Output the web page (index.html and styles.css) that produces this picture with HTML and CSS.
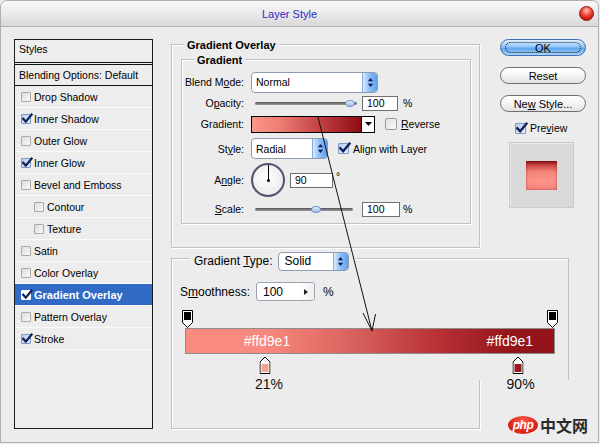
FILE: index.html
```html
<!DOCTYPE html>
<html>
<head>
<meta charset="utf-8">
<title>Layer Style</title>
<link rel="stylesheet" href="styles.css">
</head>
<body>
<div class="window">
  <div class="titlebar"><span class="title">Layer Style</span><span class="close"></span></div>
  <div class="content">
    <div class="styles-list">
      <div class="list-head">Styles</div>
      <div class="list-blend">Blending Options: Default</div>
      <div class="item"><span class="cb"></span>Drop Shadow</div>
      <div class="item"><span class="cb on"><svg viewBox="0 0 12 12"><path d="M2.2 5.8 L4.8 8.6 L10.6 1.6"/></svg></span>Inner Shadow</div>
      <div class="item"><span class="cb"></span>Outer Glow</div>
      <div class="item"><span class="cb on"><svg viewBox="0 0 12 12"><path d="M2.2 5.8 L4.8 8.6 L10.6 1.6"/></svg></span>Inner Glow</div>
      <div class="item"><span class="cb"></span>Bevel and Emboss</div>
      <div class="item sub"><span class="cb"></span>Contour</div>
      <div class="item sub"><span class="cb"></span>Texture</div>
      <div class="item"><span class="cb"></span>Satin</div>
      <div class="item"><span class="cb"></span>Color Overlay</div>
      <div class="item selected"><span class="cb on white"><svg viewBox="0 0 12 12"><path d="M2.2 5.8 L4.8 8.6 L10.6 1.6"/></svg></span>Gradient Overlay</div>
      <div class="item"><span class="cb"></span>Pattern Overlay</div>
      <div class="item"><span class="cb on"><svg viewBox="0 0 12 12"><path d="M2.2 5.8 L4.8 8.6 L10.6 1.6"/></svg></span>Stroke</div>
    </div>

    <div class="main">
      <div class="top-row">
        <div class="group outer">
          <div class="gtitle"><span>Gradient Overlay</span></div>
          <div class="group inner">
            <div class="gtitle"><span>Gradient</span></div>
            <div class="rows">
              <div class="row r1">
                <div class="lbl">Blend M<u>o</u>de:</div>
                <div class="select w-blend"><span class="txt">Normal</span><span class="spin"><svg width="7" height="11" viewBox="0 0 7 11"><path d="M3.5 1 L6.2 4.3 H0.8Z M3.5 10 L6.2 6.7 H0.8Z"/></svg></span></div>
              </div>
              <div class="row r2">
                <div class="lbl">O<u>p</u>acity:</div>
                <div class="slider w-op"><span class="track"></span><span class="thumb" style="left:90px"></span></div>
                <div class="num w-op-in">100</div>
                <span class="pct">%</span>
              </div>
              <div class="row r3">
                <div class="lbl">Gradient:</div>
                <div class="swatch"></div>
                <div class="swatch-dd"><svg width="7" height="4" viewBox="0 0 7 4"><path d="M0 0H7L3.5 4Z"/></svg></div>
                <span class="cb big rev"></span>
                <span class="cbtxt"><u>R</u>everse</span>
              </div>
              <div class="row r4">
                <div class="lbl">St<u>y</u>le:</div>
                <div class="select w-style"><span class="txt">Radial</span><span class="spin"><svg width="7" height="11" viewBox="0 0 7 11"><path d="M3.5 1 L6.2 4.3 H0.8Z M3.5 10 L6.2 6.7 H0.8Z"/></svg></span></div>
                <span class="cb big on align"><svg viewBox="0 0 12 12"><path d="M2.2 5.8 L4.8 8.6 L10.6 1.6"/></svg></span>
                <span class="cbtxt">Align with Layer</span>
              </div>
              <div class="row r5">
                <div class="lbl">A<u>n</u>gle:</div>
                <div class="dial"><span class="needle"></span><span class="dot"></span></div>
                <div class="num w-ang">90</div>
                <span class="deg">°</span>
              </div>
              <div class="row r6">
                <div class="lbl"><u>S</u>cale:</div>
                <div class="slider w-sc"><span class="track"></span><span class="thumb" style="left:56px"></span></div>
                <div class="num w-sc-in">100</div>
                <span class="pct">%</span>
              </div>
            </div>
          </div>
        </div>

        <div class="right">
          <div class="btn ok"><span>OK</span></div>
          <div class="btn"><span>Reset</span></div>
          <div class="btn"><span>Ne<u>w</u> Style...</span></div>
          <div class="pv-row"><span class="cb big on"><svg viewBox="0 0 12 12"><path d="M2.2 5.8 L4.8 8.6 L10.6 1.6"/></svg></span><span class="cbtxt">Pre<u>v</u>iew</span></div>
          <div class="preview"><div class="pv-square"></div></div>
        </div>
      </div>

      <div class="gt-panel">
        <div class="gt-title">
          <div class="gt-bg">
            <span class="gt-lbl">Gradient <u>T</u>ype:</span>
            <div class="select gt-select"><span class="txt">Solid</span><span class="spin"><svg width="7" height="11" viewBox="0 0 7 11"><path d="M3.5 1 L6.2 4.3 H0.8Z M3.5 10 L6.2 6.7 H0.8Z"/></svg></span></div>
          </div>
        </div>
        <div class="smooth-row">
          <span class="sm-lbl">S<u>m</u>oothness:</span>
          <div class="sm-input"><span class="txt">100</span><span class="sm-btn"><svg width="4" height="6" viewBox="0 0 4 6"><path d="M0 0L4 3L0 6Z"/></svg></span></div>
          <span class="sm-pct">%</span>
        </div>
        <div class="editor">
          <div class="ostops">
            <svg class="ostop left" width="11" height="18" viewBox="0 0 11 18"><path d="M0.5 0.5 H10.5 V12.5 L5.5 17.5 L0.5 12.5 Z" fill="#fff" stroke="#000"/><rect x="2" y="2" width="7" height="8" fill="#000"/></svg>
            <svg class="ostop rightstop" width="11" height="18" viewBox="0 0 11 18"><path d="M0.5 0.5 H10.5 V12.5 L5.5 17.5 L0.5 12.5 Z" fill="#fff" stroke="#000"/><rect x="2" y="2" width="7" height="8" fill="#000"/></svg>
          </div>
          <div class="gbar">
            <span class="gbar-txt" style="left:22%">#ffd9e1</span>
            <span class="gbar-txt" style="left:88%">#ffd9e1</span>
          </div>
          <div class="cstops">
            <svg class="cstop" style="left:21.7%" width="11" height="18" viewBox="0 0 11 18"><path d="M0.5 17.5 H10.5 V6 L5.5 1 L0.5 6 Z" fill="#fff" stroke="#000"/><rect x="2" y="8" width="7" height="8" fill="#f3a196"/></svg>
            <svg class="cstop" style="left:89.9%" width="11" height="18" viewBox="0 0 11 18"><path d="M0.5 17.5 H10.5 V6 L5.5 1 L0.5 6 Z" fill="#fff" stroke="#000"/><rect x="2" y="8" width="7" height="8" fill="#9b1822"/></svg>
          </div>
          <div class="clabels">
            <span class="clabel" style="left:22.7%">21%</span>
            <span class="clabel" style="left:90.7%">90%</span>
          </div>
        </div>
      </div>
      <div class="gt-foot"></div>
    </div>
  </div>

  <div class="logo"><span class="php">php</span><span class="cn">中文网</span></div>

  <svg class="arrow" width="600" height="444" viewBox="0 0 600 444">
    <path d="M318 117 L372 331 M363 313 L372 331 L375.5 314" fill="none" stroke="#111" stroke-width="1"/>
  </svg>
</div>
</body>
</html>
```

FILE: styles.css
```css
* { box-sizing: border-box; }
html, body { margin: 0; padding: 0; }
body {
  width: 600px; height: 444px; overflow: hidden;
  background: #ececec;
  font-family: "Liberation Sans", Arial, sans-serif;
  font-size: 10.5px; color: #000;
}
u { text-decoration: underline; text-underline-offset: 1px; }

.window {
  position: relative;
  width: 599px; height: 443px;
  border: 1px solid #b0b0b0;
  border-radius: 7px 7px 0 0;
  background: #ececec;
}

/* title bar */
.titlebar {
  height: 26px;
  border-bottom: 1px solid #b2b2b2;
  border-radius: 6px 6px 0 0;
  background: linear-gradient(#f9f9f9, #e8e8e8 55%, #d9d9d9);
  display: flex; align-items: center;
}
.title { margin-left: 261px; color: #2a2ac4; font-size: 11px; }
.close {
  margin-left: auto; margin-right: 4px;
  width: 15px; height: 15px; border-radius: 50%;
  border: 1px solid #8b1b12;
  background: radial-gradient(circle at 50% 28%, #ffc4bc 0, #f4584a 35%, #cf1c10 70%, #9a0c06 100%);
}

.content { display: flex; align-items: flex-start; }

/* styles list */
.styles-list {
  margin: 12px 0 0 13px;
  width: 139px; height: 390px;
  border: 1px solid #1b1b1b;
  background: #ededed;
}
.list-head {
  height: 25px; padding: 2px 0 0 4px; line-height: 14px;
  border-bottom: 3px double #111;
}
.list-blend {
  height: 21px; padding-left: 4px; line-height: 20px;
  border-bottom: 1px solid #111;
}
.item {
  height: 22px; display: flex; align-items: center;
  padding-left: 6px;
  border-bottom: 1px solid #fbfbfb;
}
.item.sub { padding-left: 19px; }
.item.selected {
  background: #316ac5; color: #fff;
  font-weight: bold; font-size: 11px;
}

/* checkboxes */
.cb {
  position: relative; flex: none;
  width: 10px; height: 10px; margin-right: 3px;
  border: 1px solid #a9a9a9; border-radius: 1px;
  background: linear-gradient(135deg, #dedede, #f8f8f8);
}
.cb.on { background: linear-gradient(135deg, #b9cdea, #e6eefa); border-color: #7f9ac2; }
.cb.white { background: #fff; border-color: #fff; }
.cb svg {
  position: absolute; left: -1px; top: -2px; width: 12px; height: 12px; overflow: visible;
}
.cb svg path { fill: none; stroke: #0d1f5c; stroke-width: 2.2; stroke-linecap: square; }
.cb.big { width: 11px; height: 11px; margin-right: 4px; }
.cb.big svg { width: 13px; height: 13px; }
.cb.rev { width: 12px; height: 12px; margin-left: 10px; background: linear-gradient(135deg, #e2e2e2, #fafafa); border-color: #9a9a9a; border-radius: 2px; }
.cb.align { margin-left: 10px; }

/* main column */
.main { margin-left: 18px; }
.top-row { display: flex; align-items: flex-start; }

.group {
  border: 1px solid #c1c1c1;
  box-shadow: inset 1px 1px 0 #fff, 1px 1px 0 #fff;
}
.outer { width: 309px; margin-top: 17px; }
.inner { width: 290px; margin: 7px 0 23px 9px; }
.gtitle {
  display: flex; height: 14px; margin-top: -7px; line-height: 14px;
  font-weight: bold; font-size: 11px;
}
.gtitle span { background: #ececec; padding: 0 3px; margin-left: 12px; }

.rows { margin-top: 4px; padding-bottom: 3px; }
.row { display: flex; align-items: center; }
.r1 { height: 22px; }
.r2 { height: 20px; }
.r3 { height: 22px; }
.r4 { height: 27px; }
.r5 { height: 36px; }
.r6 { height: 22px; }
.lbl { width: 62px; margin-right: 7px; text-align: right; flex: none; }

.select {
  display: flex; align-items: center; height: 21px;
  border: 1px solid #8c9bb0; border-radius: 4px;
  background: #fff; overflow: hidden; padding-left: 4px;
}
.select .txt { flex: 1; }
.spin {
  width: 15px; align-self: stretch;
  display: flex; align-items: center; justify-content: center;
  border-left: 1px solid #86aee0;
  background: linear-gradient(90deg, #d9ebfd, #8dc0f6 45%, #5f9fec 100%);
}
.spin svg path { fill: #0d1f5a; }
.w-blend { width: 127px; }
.w-style { width: 77px; }

.slider { position: relative; height: 9px; margin-left: 4px; }
.w-op { width: 102px; }
.w-sc { width: 98px; }
.track {
  position: absolute; left: 0; right: 0; top: 3px; height: 3px;
  border-radius: 2px;
  background: linear-gradient(#555, #9c9c9c);
}
.thumb {
  position: absolute; top: 1px; width: 10px; height: 7px; border-radius: 50%;
  border: 1px solid #6f8fc6;
  background: linear-gradient(#e4eefc, #9bb9e6);
}
.num {
  height: 15px; border: 1px solid #707070; background: #fff;
  padding-left: 4px; line-height: 13px;
}
.w-op-in { width: 36px; margin-left: 5px; }
.w-sc-in { width: 38px; margin-left: 9px; }
.pct { margin-left: 5px; }
.w-sc-in + .pct { margin-left: 3px; }

.swatch {
  width: 111px; height: 17px; border: 1px solid #000;
  background: linear-gradient(90deg, #fb968c 0%, #ef7e76 25%, #c64446 60%, #8e0d13 100%);
}
.swatch-dd {
  width: 13px; height: 17px; border: 1px solid #000; border-left: none;
  background: #fff; display: flex; align-items: center; justify-content: center;
}
.swatch-dd svg path { fill: #000; }
.cbtxt { white-space: nowrap; }

.dial {
  position: relative; width: 34px; height: 34px; border-radius: 50%;
  border: 2px solid #50556f;
  background: radial-gradient(circle at 45% 40%, #ffffff, #ececec 70%, #dcdcdc);
}
.needle { position: absolute; left: 14.5px; top: 0; width: 1.5px; height: 15px; background: #000; }
.dot { position: absolute; left: 13.5px; top: 13.5px; width: 3.5px; height: 3.5px; border-radius: 50%; background: #000; }
.w-ang { width: 43px; margin-left: 5px; }
.deg { align-self: flex-start; margin: 8px 0 0 3px; }

/* right column */
.right { width: 86px; margin: 12px 0 0 20px; display: flex; flex-direction: column; }
.btn {
  position: relative;
  width: 86px; height: 17px; margin-bottom: 11px;
  border: 1px solid #6d6d6d; border-radius: 9px;
  background: linear-gradient(#ffffff, #f6f6f6 45%, #e2e2e2);
  display: flex; align-items: center; justify-content: center;
  font-size: 11px; white-space: nowrap;
}
.btn.ok {
  border-color: #3c6db4;
  background: linear-gradient(#dff0ff, #93c8fb 45%, #5ea4ef 55%, #a9d5fc);
}
.btn.ok::after {
  content: ""; position: absolute; inset: 2px 4px;
  border: 1px dotted #1a1a1a; border-radius: 6px;
}
.pv-row { display: flex; align-items: center; height: 14px; margin: -2px 0 0 15px; }
.preview {
  width: 65px; height: 66px; margin: 7px 0 0 9px;
  background: #d9d9d9; border: 1px solid #cacaca;
  box-shadow: inset 1px 1px 0 #e8e8e8;
  display: flex; align-items: center; justify-content: center;
}
.pv-square {
  width: 31px; height: 29px;
  background: linear-gradient(#7c0b0b 0, #c54741 14%, #f4867c 38%, #fb938a 70%, #f3857b 100%);
  box-shadow: inset 0 0 3px rgba(150, 20, 20, 0.6);
}

/* gradient type panel */
.gt-panel {
  width: 398px; height: 122px; margin-top: 10px;
  border: 1px solid #c1c1c1; border-bottom: none;
  box-shadow: inset 1px 1px 0 #fff;
  font-size: 12px;
}
.gt-title { display: flex; height: 20px; margin-top: -8px; }
.gt-bg {
  display: flex; align-items: center;
  background: #ececec; margin-left: 18px; padding: 0 7px 0 4px;
}
.gt-lbl { margin-right: 5px; white-space: nowrap; }
.gt-select { width: 71px; height: 19px; padding-left: 6px; }
.smooth-row { display: flex; align-items: center; height: 21px; margin: 10px 0 0 8px; }
.sm-lbl { width: 68px; margin-right: 8px; white-space: nowrap; }
.sm-input {
  width: 59px; height: 19px; display: flex; align-items: center;
  border: 1px solid #9aa5b4; border-radius: 3px; background: #fff;
  padding-left: 6px; overflow: hidden;
}
.sm-input .txt { flex: 1; }
.sm-btn {
  width: 16px; align-self: stretch;
  display: flex; align-items: center; justify-content: center;
  background: linear-gradient(90deg, #fff, #f0f0f0);
}
.sm-btn svg path { fill: #222; }
.sm-pct { margin-left: 8px; }

.editor { width: 376px; margin: 8px 0 0 10px; }
.ostops { position: relative; height: 18px; }
.ostop { position: absolute; top: 0; }
.ostop.left { left: 0; }
.ostop.rightstop { right: 0; }
.gbar {
  position: relative;
  width: 370px; height: 26px; margin-left: 3px;
  border: 1px solid #8d8d8d;
  background: linear-gradient(90deg, #f98b80 0%, #f98a7f 21%, #d9625e 45%, #b83236 68%, #94151a 88%, #92141a 100%);
}
.gbar-txt {
  position: absolute; top: 0; transform: translateX(-50%);
  color: #fff; font-size: 14px; line-height: 24px;
}
.cstops { position: relative; width: 370px; height: 18px; margin: 2px 0 0 3px; }
.cstop { position: absolute; top: 0; transform: translateX(-50%); }
.clabels { position: relative; width: 370px; height: 16px; margin: 2px 0 0 3px; }
.clabel {
  position: absolute; top: 0; transform: translateX(-50%);
  font-size: 14px; line-height: 16px; color: #111;
}
.gt-foot {
  width: 309px; height: 49px;
  border: 1px solid #c1c1c1; border-top: none;
  box-shadow: inset 1px 0 0 #fff, 1px 1px 0 #fff;
}

/* watermark */
.logo { position: absolute; left: 507px; top: 415px; display: flex; align-items: center; }
.php {
  width: 30px; height: 18px; border-radius: 50%;
  background: radial-gradient(ellipse at 50% 30%, #ff5a4a, #e1251b 60%, #c8140c);
  color: #fff; font-weight: bold; font-style: italic; font-size: 12px;
  display: flex; align-items: center; justify-content: center; letter-spacing: -0.5px;
}
.cn {
  margin-left: 2px;
  font-family: "Noto Sans CJK SC", sans-serif; font-weight: bold;
  font-size: 16px; line-height: 18px; color: #2a2a2a;
}

.arrow { position: absolute; left: -1px; top: -1px; pointer-events: none; }
```
